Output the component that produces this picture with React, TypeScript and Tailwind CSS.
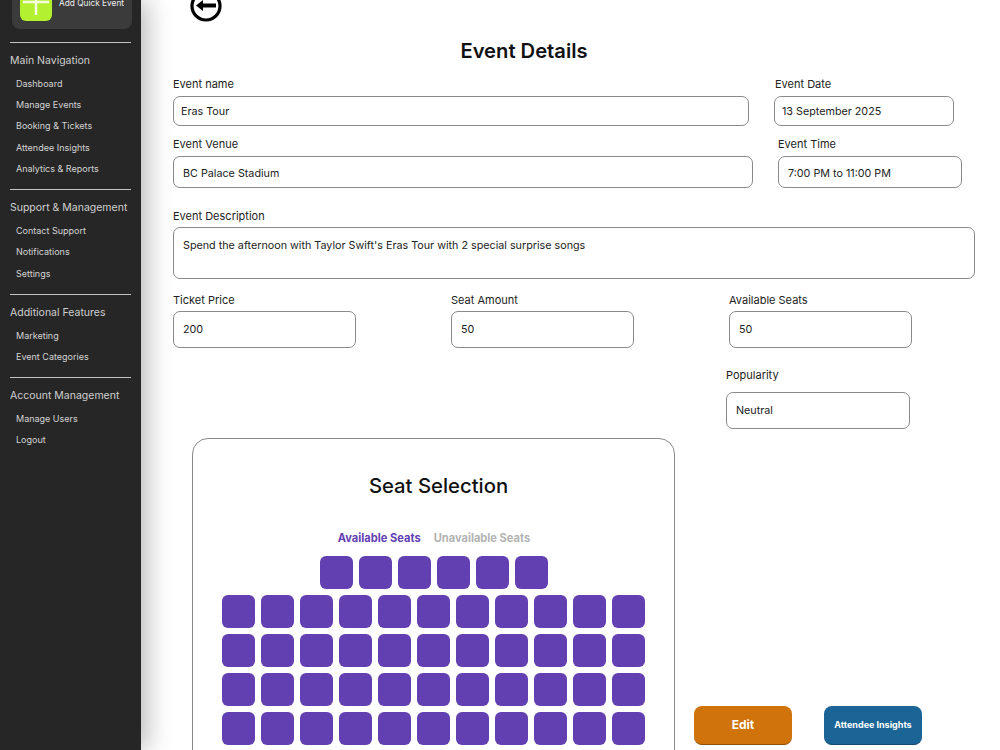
import { ReactNode } from "react";

const navGroups = [
  { title: "Main Navigation", items: ["Dashboard", "Manage Events", "Booking & Tickets", "Attendee Insights", "Analytics & Reports"] },
  { title: "Support & Management", items: ["Contact Support", "Notifications", "Settings"] },
  { title: "Additional Features", items: ["Marketing", "Event Categories"] },
  { title: "Account Management", items: ["Manage Users", "Logout"] },
];

function Sidebar() {
  return (
    <aside className="w-[141px] h-full shrink-0 bg-[#262626] px-[10px] overflow-hidden relative z-10 shadow-[6px_0_24px_rgba(0,0,0,0.28)]">
      <div className="-mt-[30px] ml-[2px] w-[120px] h-[59px] rounded-[8px] bg-[#3b3b3b] flex pl-[8px] pt-[8px] gap-[7px]">
        <div className="w-[32px] h-[43px] rounded-[6px] bg-[#b3f02f] flex items-center justify-center">
          <svg width="32" height="32" viewBox="0 0 32 32" className="mt-[4px]">
            <path d="M16 3v26M3 16h26" stroke="#f4fbe0" strokeWidth="2.5" />
          </svg>
        </div>
        <span className="text-[8.3px] leading-[6px] text-[#eeeeee] mt-[22px] whitespace-nowrap">Add Quick Event</span>
      </div>
      {navGroups.map((g, i) => (
        <div key={g.title} className={`border-t border-[#c4c4c4] ${i === 0 ? "mt-[12.5px]" : "mt-[9px]"}`}>
          <div className="text-[10.5px] leading-[14px] text-[#cfcfcf] mt-[11px] mb-[5.5px] whitespace-nowrap">{g.title}</div>
          {g.items.map((item) => (
            <div key={item} className="pl-[6px] text-[9px] leading-[12px] py-[4.7px] text-[#d4d4d4] whitespace-nowrap">
              {item}
            </div>
          ))}
        </div>
      ))}
    </aside>
  );
}

function Field({ label, value, className, boxClass }: { label: string; value: string; className?: string; boxClass: string }) {
  return (
    <div className={className}>
      <div className="text-[11px] leading-[14px] text-[#222222] whitespace-nowrap">{label}</div>
      <div className={`border border-[#8a8a8a] rounded-[7px] text-[10.75px] text-[#222222] flex ${boxClass}`}>{value}</div>
    </div>
  );
}

function Row({ children, className }: { children: ReactNode; className?: string }) {
  return <div className={`flex ${className ?? ""}`}>{children}</div>;
}

function Seat() {
  return <div className="w-[33px] h-[33px] rounded-[6px] bg-[#6240b2]" />;
}

function SeatCard() {
  return (
    <div className="ml-[19px] mt-[9px] w-[483px] h-[340px] shrink-0 border border-[#8a8a8a] rounded-[16px] pt-[35px] flex flex-col items-center">
      <h2 className="text-[20.3px] leading-[24px] font-medium text-[#111111] ml-[10px]">Seat Selection</h2>
      <div className="flex gap-[13px] mt-[33px] ml-[1px] text-[11.1px] leading-[14px] font-bold">
        <span className="text-[#6240b2]">Available Seats</span>
        <span className="text-[#b3b3b3]">Unavailable Seats</span>
      </div>
      <div className="mt-[11px] flex flex-col gap-[6px] self-start ml-[29px]">
        <div className="flex gap-[6px] ml-[98px]">
          {Array.from({ length: 6 }).map((_, i) => (
            <Seat key={i} />
          ))}
        </div>
        {Array.from({ length: 4 }).map((_, r) => (
          <div key={r} className="flex gap-[6px]">
            {Array.from({ length: 11 }).map((_, i) => (
              <Seat key={i} />
            ))}
          </div>
        ))}
      </div>
    </div>
  );
}

export default function App() {
  return (
    <div className="w-[1000px] h-[750px] overflow-hidden flex bg-white font-['Inter','Liberation_Sans',sans-serif]">
      <Sidebar />
      <main className="flex-1 pl-[32px] min-w-0">
        <svg width="32" height="32" viewBox="0 0 32 32" className="block -mt-[10px] ml-[17px]">
          <circle cx="16" cy="16" r="14" fill="none" stroke="#000000" strokeWidth="3.2" />
          <path d="M26 15.5H12" stroke="#000000" strokeWidth="4" />
          <path d="M13 10v11L6 15.5z" fill="#000000" />
        </svg>
        <h1 className="text-[20.2px] leading-[24px] font-semibold text-[#111111] text-center w-[702px] mt-[17px]">Event Details</h1>

        <Row className="mt-[14px]">
          <Field label="Event name" value="Eras Tour" boxClass="w-[576px] h-[30px] mt-[5px] items-center pl-[7px] pt-[2px]" />
          <Field label="Event Date" value="13 September 2025" className="ml-[26px]" boxClass="w-[180px] h-[30px] mt-[5px] items-center -ml-[1px] pl-[7px] pt-[2px]" />
        </Row>
        <Row className="mt-[11px]">
          <Field label="Event Venue" value="BC Palace Stadium" boxClass="w-[580px] h-[32px] mt-[5px] items-center pl-[9px] pt-[5px]" />
          <Field label="Event Time" value="7:00 PM to 11:00 PM" className="ml-[25px]" boxClass="w-[184px] h-[32px] mt-[5px] items-center pl-[9px] pt-[5px]" />
        </Row>
        <Field
          label="Event Description"
          value="Spend the afternoon with Taylor Swift's Eras Tour with 2 special surprise songs"
          className="mt-[21px]"
          boxClass="w-[802px] h-[52px] mt-[4px] pt-[10px] pl-[9px] leading-[16px]"
        />
        <Row className="mt-[14px]">
          <Field label="Ticket Price" value="200" boxClass="w-[183px] h-[37px] mt-[4px] items-center pl-[9px] pt-[2px]" />
          <Field label="Seat Amount" value="50" className="ml-[95px]" boxClass="w-[183px] h-[37px] mt-[4px] items-center pl-[9px] pt-[2px]" />
          <Field label="Available Seats" value="50" className="ml-[95px]" boxClass="w-[183px] h-[37px] mt-[4px] items-center pl-[9px] pt-[2px]" />
        </Row>
        <Field label="Popularity" value="Neutral" className="ml-[553px] mt-[20px]" boxClass="w-[184px] h-[37px] mt-[10px] items-center pl-[9px] pt-[2px]" />
        <Row>
          <SeatCard />
          <div className="flex gap-[32px] ml-[19px] mt-[277px] text-white font-bold">
            <button className="w-[98px] h-[39px] rounded-[8px] bg-[#d0730a] border-b border-[#8a5206] text-[12px]">Edit</button>
            <button className="w-[98px] h-[39px] rounded-[8px] bg-[#1a6496] border-b border-[#134a70] text-[9px]">Attendee Insights</button>
          </div>
        </Row>
      </main>
    </div>
  );
}
